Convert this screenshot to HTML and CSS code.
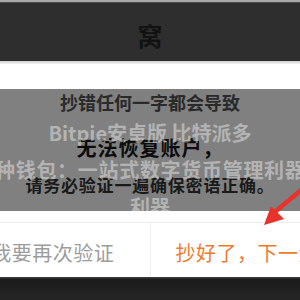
FILE: index.html
```html
<!DOCTYPE html>
<html lang="zh-CN">
<head>
<meta charset="utf-8">
<link rel="stylesheet" href="styles.css">
</head>
<body>
<div class="screen">
  <div class="topline"></div>
  <div class="header"><span class="header-char">窝</span></div>
  <div class="header-edge"></div>
  <div class="spacer"></div>
  <div class="message">
    <p class="msg-line msg-1">抄错任何一字都会导致</p>
    <p class="msg-line msg-2">无法恢复账户，</p>
    <p class="msg-line msg-3">请务必验证一遍确保密语正确。</p>
  </div>
  <div class="actions">
    <div class="action-row">
      <div class="btn btn-secondary">我要再次验证</div>
      <div class="btn btn-primary">抄好了，下一步</div>
    </div>
  </div>
  <div class="bottom-bar"></div>

  <div class="watermark">
    <div class="wm-line wm-center">Bitpie安卓版 比特派多</div>
    <div class="wm-line wm-left">种钱包：一站式数字货币管理利器</div>
    <div class="wm-line wm-center">利器</div>
  </div>

  <svg class="arrow" width="300" height="300" viewBox="0 0 300 300">
    <line x1="306" y1="186" x2="276" y2="211" stroke="#e8322c" stroke-width="4.5" stroke-linecap="round"/>
    <polygon points="264,225 271,206 284,219" fill="#e8322c"/>
  </svg>
</div>
</body>
</html>
```

FILE: styles.css
```css
html, body {
  margin: 0;
  padding: 0;
}
body {
  width: 300px;
  height: 300px;
  overflow: hidden;
  background: #ffffff;
  font-family: "Noto Sans CJK SC", "Noto Sans", sans-serif;
}
.screen {
  position: relative;
  width: 300px;
  height: 300px;
  overflow: hidden;
  display: flex;
  flex-direction: column;
}
.topline {
  height: 2px;
  background: #a9a9a9;
}
.header {
  height: 59px;
  background: #2e2e2e;
  border-top: 1px solid #4a4a4a;
  box-sizing: border-box;
  display: flex;
  justify-content: center;
  align-items: center;
  padding-top: 6px;
}
.header-char {
  font-size: 25px;
  font-weight: 700;
  color: #121212;
  line-height: 1;
}
.header-edge {
  height: 3px;
  background: linear-gradient(#cfcfcf, #f2f2f2);
}
.spacer {
  height: 25px;
  background: #ffffff;
}
.message {
  height: 122px;
  background: #808080;
  display: flex;
  flex-direction: column;
  align-items: center;
  padding-top: 2px;
  box-sizing: border-box;
}
.msg-line {
  margin: 0;
  white-space: nowrap;
  text-align: center;
}
.msg-1 {
  font-size: 18px;
  line-height: 22px;
  color: #2a2a2a;
  font-weight: 700;
}
.msg-2 {
  margin-top: 22px;
  font-size: 20px;
  line-height: 26px;
  color: #0c0c0c;
  font-weight: 700;
  letter-spacing: 1px;
}
.msg-3 {
  margin-top: 12px;
  font-size: 17px;
  line-height: 24px;
  color: #1a1a1a;
  font-weight: 700;
  letter-spacing: 0.8px;
}
.actions {
  height: 66px;
  padding-top: 11px;
  box-sizing: border-box;
  background: #ffffff;
}
.action-row {
  margin: 0 -44px;
  height: 54px;
  border-top: 1px solid #ececec;
  display: flex;
}
.btn {
  flex: 1;
  display: flex;
  justify-content: center;
  align-items: center;
  padding-top: 5px;
  font-size: 20px;
  letter-spacing: 0.5px;
  white-space: nowrap;
}
.btn-secondary {
  color: #9c9c9c;
}
.btn-primary {
  color: #f07a2c;
  border-left: 1px solid #efefef;
}
.bottom-bar {
  flex: 1;
  background: linear-gradient(#3a3a3a 0, #3a3a3a 1px, #1b1b1b 2px, #262626 100%);
}
.watermark {
  position: absolute;
  left: 0;
  top: 114px;
  width: 300px;
  font-size: 20px;
  line-height: 37px;
  font-weight: 700;
  color: rgba(255, 255, 255, 0.42);
}
.wm-line {
  white-space: nowrap;
}
.wm-center {
  text-align: center;
}
.wm-left {
  text-align: left;
  margin-left: -5px;
  letter-spacing: 0.7px;
}
.arrow {
  position: absolute;
  left: 0;
  top: 0;
}
```
